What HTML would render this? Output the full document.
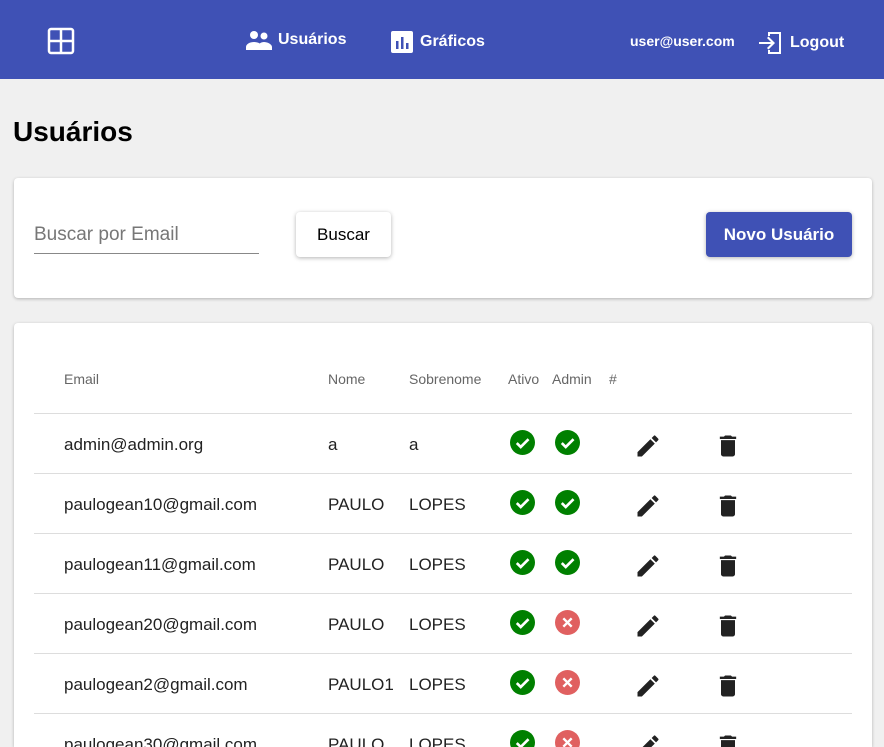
<!DOCTYPE html><html><head><style>
html{height:747px;overflow:hidden}
body{margin:0;width:884px;height:747px;overflow:hidden;background:#f0f0f0;font-family:"Liberation Sans",Roboto,sans-serif;position:relative}
.hd{position:absolute;left:0;top:0;width:884px;height:79px;background:#3f51b5;color:#fff;font-weight:bold}
.hd div{position:absolute;top:30px;font-size:16px;display:flex;align-items:center;gap:6px}
h1{position:absolute;left:13px;top:116px;margin:0;font-size:28px}
.card{position:absolute;left:14px;width:858px;background:#fff;border-radius:4px;box-shadow:0 1px 3px rgba(0,0,0,.25)}
.abs{position:absolute}
.row{position:absolute;left:34px;width:818px;height:60px;border-top:1px solid #ddd;font-size:17px;color:#222}
.row span{position:absolute;top:21px}
.th{position:absolute;top:48px;font-size:14px;color:#666}
</style></head><body>
<div class="hd">
<svg class="abs" style="left:47px;top:27px" width="28" height="28" viewBox="0 0 28 28"><rect x="2" y="2" width="24" height="24" rx="2" fill="none" stroke="#fff" stroke-width="2.5"/><line x1="14" y1="2" x2="14" y2="26" stroke="#fff" stroke-width="2.5"/><line x1="2" y1="14" x2="26" y2="14" stroke="#fff" stroke-width="2.5"/></svg>
<div style="left:246px"><svg width="26" height="20" viewBox="0 0 26 20"><circle cx="8" cy="5" r="4" fill="#fff"/><circle cx="18" cy="6" r="3.5" fill="#fff"/><path d="M0 20v-3c0-3 4-5 8-5s8 2 8 5v3z M12 20v-3c0-3 3-5 6-5s8 2 8 5v3z" fill="#fff"/></svg>Usuários</div>
<div style="left:390px"><svg width="24" height="24" viewBox="0 0 24 24"><rect x="1" y="1" width="22" height="22" rx="2" fill="#fff"/><rect x="6" y="11" width="2.5" height="8" fill="#3f51b5"/><rect x="11" y="7" width="2.5" height="12" fill="#3f51b5"/><rect x="16" y="13" width="2.5" height="6" fill="#3f51b5"/></svg>Gráficos</div>
<div style="left:630px;font-size:14px;top:33px">user@user.com</div>
<div style="left:758px"><svg width="26" height="26" viewBox="0 0 26 26"><path d="M10 2h13v22H10v-4h2v2h9V4h-9v2h-2z M1 12h12l-4-4 1.5-1.5L17 13l-6.5 6.5L9 18l4-4H1z" fill="#fff"/></svg>Logout</div>
</div>
<h1>Usuários</h1>
<div class="card" style="top:178px;height:120px">
<div class="abs" style="left:20px;top:46px;font-size:19px;color:#777">Buscar por Email</div>
<div class="abs" style="left:20px;top:75px;width:225px;height:1px;background:#888"></div>
<div class="abs" style="left:282px;top:34px;width:95px;height:45px;border-radius:4px;box-shadow:0 1px 4px rgba(0,0,0,.3);font-size:17px;line-height:45px;text-align:center">Buscar</div>
<div class="abs" style="left:692px;top:34px;width:146px;height:45px;border-radius:4px;background:#3f51b5;color:#fff;font-weight:bold;box-shadow:0 1px 4px rgba(0,0,0,.3);font-size:17px;line-height:45px;text-align:center">Novo Usuário</div>
</div>
<div class="card" style="top:323px;height:424px;border-radius:4px 4px 0 0">
<span class="th" style="left:50px">Email</span><span class="th" style="left:314px">Nome</span><span class="th" style="left:395px">Sobrenome</span><span class="th" style="left:494px">Ativo</span><span class="th" style="left:538px">Admin</span><span class="th" style="left:595px">#</span>
</div>
<svg width="0" height="0" style="position:absolute"><defs>
<g id="ok"><circle cx="12" cy="12" r="12" fill="#008000"/><path d="M6.5 12.5l3.8 3.8 7.5-7.5" stroke="#fff" stroke-width="2.5" fill="none"/></g>
<g id="no"><circle cx="12" cy="12" r="12" fill="#e06060"/><path d="M8 8l8 8M16 8l-8 8" stroke="#fff" stroke-width="2.3"/></g>
<g id="ed"><path d="M3 17.25V21h3.75L17.81 9.940l-3.75-3.75L3 17.25zM20.71 7.04a1 1 0 000-1.41l-2.34-2.340a1 1 0 00-1.41 0l-1.83 1.83 3.75 3.75 1.83-1.83z" fill="#222"/></g>
<g id="tr"><path d="M6 19c0 1.1.9 2 2 2h8c1.1 0 2-.9 2-2V7H6v12zM19 4h-3.5l-1-1h-5l-1 1H5v2h14V4z" fill="#222"/></g>
</defs></svg>
<div id="rows"></div>
<script>
var d=[["admin@admin.org","a","a",1],["paulogean10@gmail.com","PAULO","LOPES",1],["paulogean11@gmail.com","PAULO","LOPES",1],["paulogean20@gmail.com","PAULO","LOPES",0],["paulogean2@gmail.com","PAULO1","LOPES",0],["paulogean30@gmail.com","PAULO","LOPES",0]];
var h="";d.forEach(function(r,i){h+='<div class="row" style="top:'+(413+i*60)+'px;'+(i==5?'height:33px;overflow:hidden':'')+'"><span style="left:30px">'+r[0]+'</span><span style="left:294px">'+r[1]+'</span><span style="left:375px">'+r[2]+'</span><svg class="abs" style="left:476px;top:16px" width="25" height="25" viewBox="0 0 24 24"><use href="#ok"/></svg><svg class="abs" style="left:521px;top:16px" width="25" height="25" viewBox="0 0 24 24"><use href="#'+(r[3]?'ok':'no')+'"/></svg><svg class="abs" style="left:600px;top:18px" width="28" height="28" viewBox="0 0 24 24"><use href="#ed"/></svg><svg class="abs" style="left:680px;top:18px" width="28" height="28" viewBox="0 0 24 24"><use href="#tr"/></svg></div>'});
document.getElementById("rows").innerHTML=h;
</script>
</body></html>
